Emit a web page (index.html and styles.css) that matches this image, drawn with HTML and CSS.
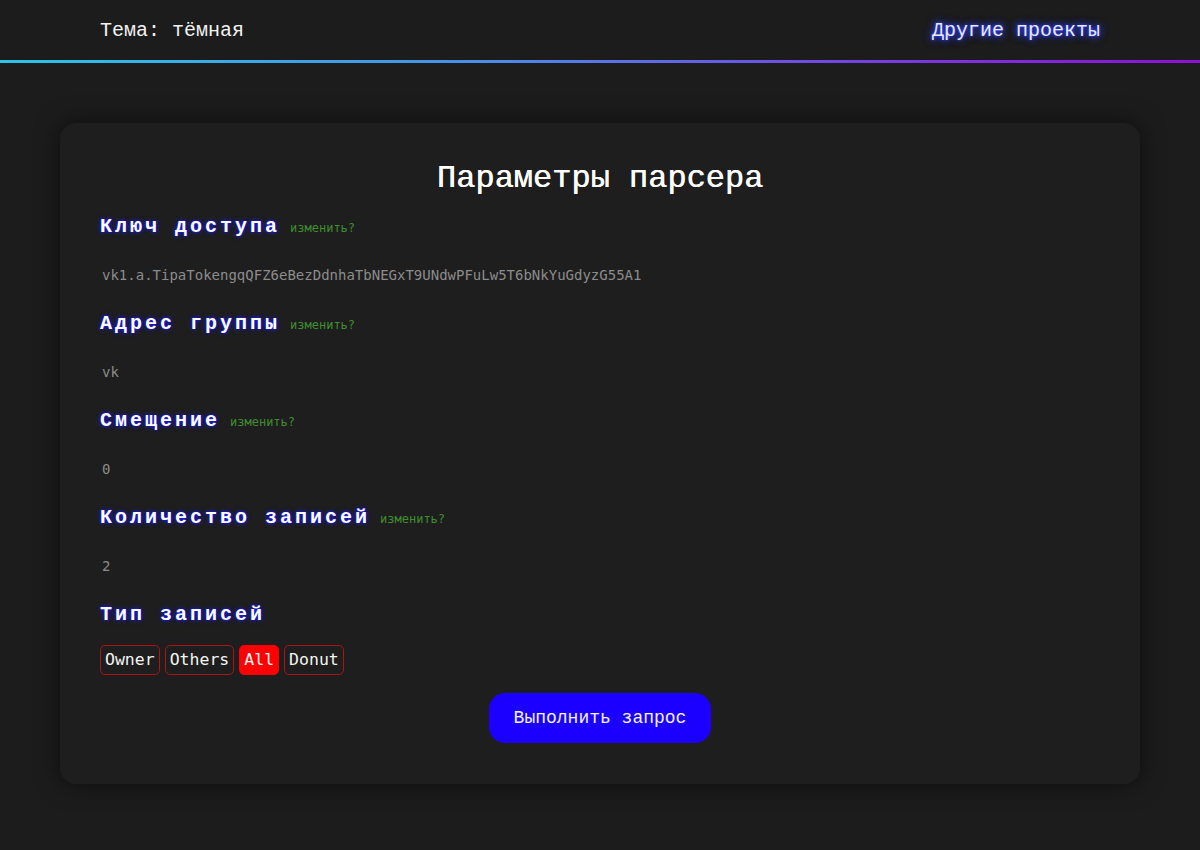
FILE: index.html
```html
<!DOCTYPE html>
<html lang="ru">
<head>
<meta charset="utf-8">
<title>Параметры парсера</title>
<link rel="stylesheet" href="styles.css">
</head>
<body>
<header class="topbar">
  <span class="theme">Тема: тёмная</span>
  <a class="projects" href="#">Другие проекты</a>
</header>
<main class="card">
  <h1 class="title">Параметры парсера</h1>
  <section class="field">
    <div class="field-head"><span class="label">Ключ доступа</span><a class="edit" href="#">изменить?</a></div>
    <div class="value">vk1.a.TipaTokengqQFZ6eBezDdnhaTbNEGxT9UNdwPFuLw5T6bNkYuGdyzG55A1</div>
  </section>
  <section class="field">
    <div class="field-head"><span class="label">Адрес группы</span><a class="edit" href="#">изменить?</a></div>
    <div class="value">vk</div>
  </section>
  <section class="field">
    <div class="field-head"><span class="label">Смещение</span><a class="edit" href="#">изменить?</a></div>
    <div class="value">0</div>
  </section>
  <section class="field">
    <div class="field-head"><span class="label">Количество записей</span><a class="edit" href="#">изменить?</a></div>
    <div class="value">2</div>
  </section>
  <section class="field field-last">
    <div class="field-head"><span class="label">Тип записей</span></div>
    <div class="types">
      <button class="type">Owner</button>
      <button class="type">Others</button>
      <button class="type active">All</button>
      <button class="type">Donut</button>
    </div>
  </section>
  <div class="actions">
    <button class="submit">Выполнить запрос</button>
  </div>
</main>
</body>
</html>
```

FILE: styles.css
```css
* { box-sizing: border-box; }
html, body {
  margin: 0;
  background: #1c1c1c;
  color: #fff;
  font-family: "Liberation Mono", "DejaVu Sans Mono", monospace;
}
body { padding-bottom: 60px; }
.topbar {
  height: 63px;
  display: flex;
  align-items: center;
  justify-content: space-between;
  padding: 0 100px;
  font-size: 20px;
  border-bottom: 3px solid transparent;
  border-image: linear-gradient(90deg, #2cc4e6, #4a8ee8 40%, #7a3ae0 75%, #8e10d4) 1;
}
.theme { color: #f2f2f2; }
.projects {
  color: #e8e8ff;
  text-decoration: none;
  text-shadow: 0 0 3px #3344ff, 0 0 7px #3344ff, 0 0 10px #2233cc;
}
.card {
  width: 1080px;
  margin: 60px auto 0;
  background: #1e1e1e;
  border-radius: 16px;
  box-shadow: 0 0 24px rgba(0,0,0,0.55);
  padding: 36px 40px 41px;
}
.title {
  margin: 0 0 16px;
  text-align: center;
  font-size: 32px;
  line-height: 40px;
  font-weight: normal;
  color: #fff;
  text-shadow: 0.5px 0 0 #fff;
}
.field { margin-bottom: 27px; }
.field-last { margin-bottom: 18px; }
.field-head {
  display: flex;
  align-items: baseline;
  gap: 10px;
  height: 24px;
  line-height: 24px;
}
.label {
  font-size: 20px;
  font-weight: bold;
  letter-spacing: 3px;
  color: #fff;
  text-shadow: 0 0 1px #1a1aff, 0 0 2px #1a1aff, 0 0 5px #1a1aff;
}
.edit {
  font-family: "DejaVu Sans Mono", monospace;
  font-size: 12px;
  color: #3f8f2c;
  text-decoration: none;
}
.value {
  margin-top: 26px;
  font-family: "DejaVu Sans Mono", monospace;
  font-size: 14px;
  height: 20px;
  line-height: 20px;
  color: #8c8c8c;
  padding-left: 2px;
}
.types {
  display: flex;
  gap: 5px;
  margin-top: 18px;
}
.type {
  font-family: "DejaVu Sans Mono", monospace;
  font-size: 16.5px;
  line-height: 20px;
  height: 30px;
  padding: 4px 4px;
  color: #f4f4f4;
  background: transparent;
  border: 1px solid #a8161a;
  border-radius: 5px;
}
.type.active {
  background: #ff0000;
  border-color: #ff0000;
}
.actions {
  display: flex;
  justify-content: center;
}
.submit {
  font-family: "Liberation Mono", monospace;
  font-size: 18px;
  height: 50px;
  padding: 0 25px;
  color: #f4f0ff;
  background: #1b00ff;
  border: none;
  border-radius: 16px;
}
```
